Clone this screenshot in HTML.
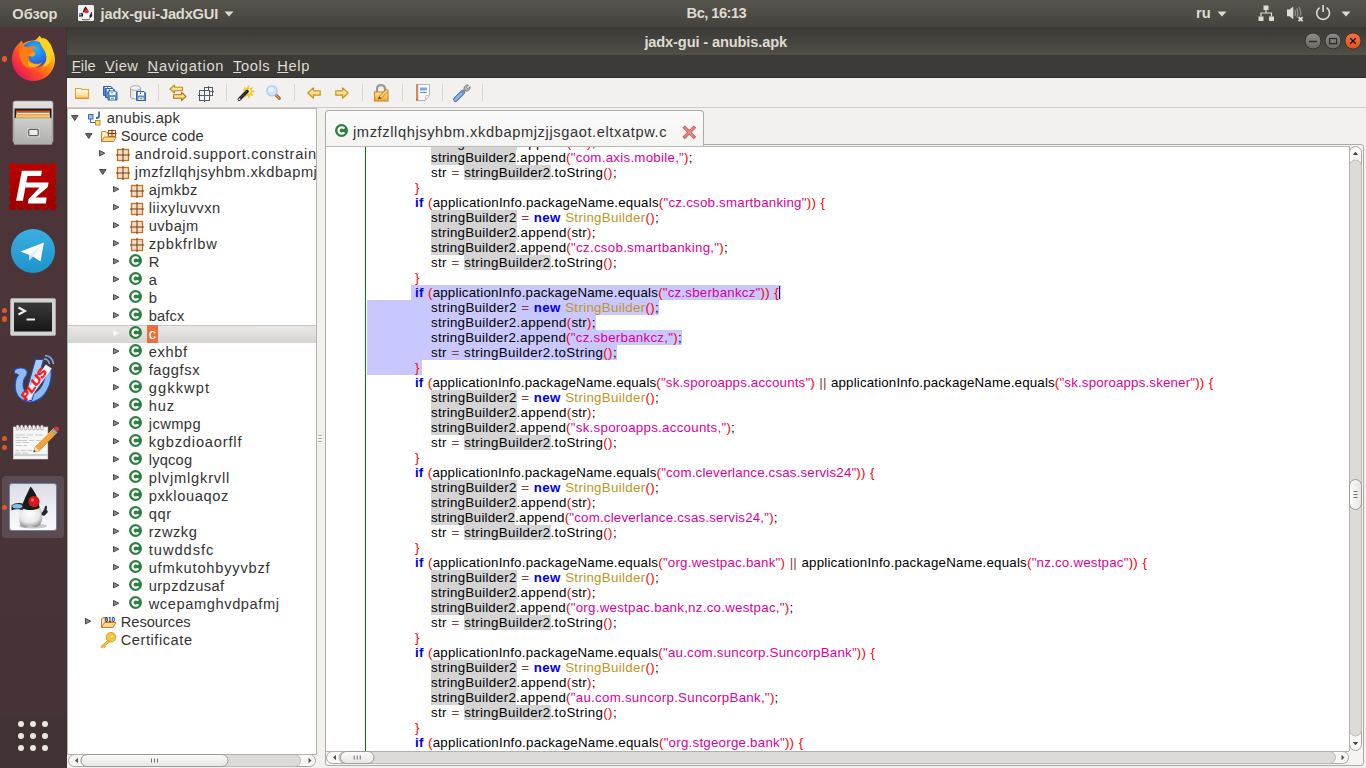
<!DOCTYPE html><html><head><meta charset="utf-8"><style>
*{margin:0;padding:0;box-sizing:border-box}
html,body{width:1366px;height:768px;overflow:hidden;background:#f2f1f0;font-family:"Liberation Sans",sans-serif}
.a{position:absolute}
svg.a{overflow:visible}
#topbar{left:0;top:0;width:1366px;height:27px;background:linear-gradient(#57544d,#45433e)}
#launcher{left:0;top:27px;width:67px;height:741px;background:linear-gradient(#4d3539,#493438 60%,#463337)}
#titlebar{left:67px;top:27px;width:1299px;height:28px;background:linear-gradient(#3b3a36,#3e3d39 20%,#524f49)}
#menubar{left:67px;top:55px;width:1299px;height:23px;background:#3c3b37;border-bottom:1px solid #2e2d2a}
#toolbar{left:67px;top:78px;width:1299px;height:30px;background:#f2f1f0;border-bottom:1px solid #cfccc6}
.tb{color:#dfdbd2;font-weight:bold;font-size:14.67px;white-space:nowrap;line-height:18px}
.menu{color:#dfdbd2;font-size:14.67px;white-space:nowrap;top:57px;line-height:18px;letter-spacing:0.4px}
.menu u{text-decoration:underline;text-decoration-thickness:1px;text-underline-offset:0.6px}
.sep{width:1px;height:17px;top:84px;background:#d9d6d1}
#tree{left:67px;top:108px;width:250px;height:647px;background:#fff;border-left:1px solid #b6b3ad;border-right:1px solid #b6b3ad;border-top:1px solid #bdbab5;overflow:hidden}
.tt{position:absolute;font-size:14.67px;line-height:18px;height:18px;color:#333;white-space:nowrap;letter-spacing:0.45px}
.code{position:absolute;left:0;font-size:13.3px;line-height:15px;height:15px;white-space:pre;color:#000;word-spacing:0.5px}
.k{color:#0000ee;font-weight:bold}
.s{color:#dc009c}
.p{color:#ff0000}
.o{color:#804040}
.c{color:#c09526}
.h{background:#d4d4d4}
</style></head><body>
<div id="topbar" class="a"></div>
<div class="a tb" style="left:12.3px;top:5px">Обзор</div>
<div class="a tb" style="left:100.6px;top:5px;letter-spacing:-0.19px">jadx-gui-JadxGUI</div>
<div class="a tb" style="left:686.6px;top:4px;letter-spacing:-0.527px">Вс, 16:13</div>
<div class="a tb" style="left:1196px;top:4px">ru</div>
<svg class="a" style="left:78px;top:5px;" width="16" height="16" viewBox="0 0 16 16"><rect x="0" y="0" width="16" height="16" rx="1.2" fill="#eeeef4"/>
<path d="M7.5 1.2 C6.3 3 5 5 4.8 7.5 L10.5 7.8 C10.2 5.5 9 3 7.5 1.2 Z" fill="#222"/>
<path d="M3.8 7.5 C2.8 10 3.2 13.5 4.2 14.5 C5.5 15.2 7.5 14.8 8.2 14 C9.2 15 11.2 14.8 11.8 13.5 C12.5 11.5 12 9 10.8 7.6 Z" fill="#fafafa" stroke="#b0b0b0" stroke-width="0.4"/>
<path d="M4 14.2 C6 15.2 10 15.2 12 14" stroke="#444" stroke-width="0.9" fill="none"/>
<circle cx="8.4" cy="6.2" r="2.1" fill="#e62828"/>
<path d="M1.2 8.6 C2.5 7.8 4.2 7.8 5.2 8.6 L4.8 11.8 C3.5 11.4 2.2 11.6 1.3 12 Z" fill="#1e1e1e"/>
<ellipse cx="2.4" cy="9.6" rx="1.2" ry="1" fill="#8cc0f0"/>
<path d="M11.5 10.5 C12.5 9.5 12.8 8.5 13 7.2 C13.5 6.8 14.2 7 13.9 8.2 L13.7 9.2 C14.6 9.5 14.4 11.4 13.5 11.8 C13 13 12 13 11.5 12.5 Z" fill="#1e1e1e"/></svg><svg class="a" style="left:224px;top:11px;" width="10" height="6" viewBox="0 0 10 6"><path d="M0.5 0.5 H9.5 L5 5.5 Z" fill="#dfdbd2"/></svg><svg class="a" style="left:1217px;top:11px;" width="10" height="6" viewBox="0 0 10 6"><path d="M0.5 0.5 H9.5 L5 5.5 Z" fill="#dfdbd2"/></svg><svg class="a" style="left:1341px;top:11px;" width="10" height="6" viewBox="0 0 10 6"><path d="M0.5 0.5 H9.5 L5 5.5 Z" fill="#dfdbd2"/></svg><svg class="a" style="left:1258px;top:5px;" width="17" height="17" viewBox="0 0 17 17"><rect x="5.5" y="0.5" width="5" height="4.5" fill="#dfdbd2"/><rect x="0.5" y="11.5" width="5" height="4.5" fill="#dfdbd2"/><rect x="11" y="11.5" width="5" height="4.5" fill="#dfdbd2"/><path d="M8 5 V8 M3 11.5 V8 H13.5 V11.5" fill="none" stroke="#dfdbd2" stroke-width="1.2"/></svg><svg class="a" style="left:1284px;top:3px" width="22" height="22" viewBox="1284 3 22 22"><path d="M1287 9.5 H1289.5 L1293.3 6.5 V19.2 L1289.5 16.2 H1287 Z" fill="#e0ddd8"/><path d="M1295 10 Q1296 13 1295 16 M1296.8 8.3 Q1298.8 13 1297 17.6 M1298.8 6.8 Q1301.6 12 1300.3 15.8" fill="none" stroke="#8e8b85" stroke-width="1.3"/><path d="M1298.6 17.2 L1302.6 21.2 M1302.6 17.2 L1298.6 21.2" stroke="#e6e3de" stroke-width="1.8"/></svg><svg class="a" style="left:1314px;top:3px" width="20" height="20" viewBox="1314 3 20 20"><path d="M1319.6 7.6 A6.4 6.4 0 1 0 1326.6 7.6" fill="none" stroke="#e0ddd8" stroke-width="1.6"/><path d="M1323.1 5 V12" stroke="#e0ddd8" stroke-width="1.6"/></svg>
<div id="launcher" class="a"></div><div class="a" style="left:0;top:717px;width:67px;height:51px;background:#413234"></div><div class="a" style="left:66px;top:27px;width:1px;height:741px;background:#3a3434"></div>
<svg width="0" height="0" style="position:absolute"><defs>
<linearGradient id="ffOuter" x1="0.1" y1="0.9" x2="0.9" y2="0.1"><stop offset="0" stop-color="#e3125f"/><stop offset="0.35" stop-color="#ff4a2a"/><stop offset="0.65" stop-color="#ff9a10"/><stop offset="1" stop-color="#ffe23a"/></linearGradient>
<radialGradient id="ffGlobe" cx="0.55" cy="0.3" r="0.8"><stop offset="0" stop-color="#2ab4f6"/><stop offset="0.6" stop-color="#1f6fe6"/><stop offset="1" stop-color="#3b2a9a"/></radialGradient>
<linearGradient id="cab" x1="0" y1="0" x2="0" y2="1"><stop offset="0" stop-color="#d2d2d0"/><stop offset="1" stop-color="#9c9c9a"/></linearGradient>
<linearGradient id="term" x1="0" y1="0" x2="0" y2="1"><stop offset="0" stop-color="#3a3a3a"/><stop offset="1" stop-color="#161616"/></linearGradient>
<linearGradient id="duke" x1="0" y1="0" x2="0" y2="1"><stop offset="0" stop-color="#dcdde6"/><stop offset="1" stop-color="#fbfbfd"/></linearGradient>
<linearGradient id="plusG" x1="0" y1="0" x2="1" y2="1"><stop offset="0" stop-color="#9cc8ff"/><stop offset="1" stop-color="#2d6ad8"/></linearGradient>
</defs></svg><svg class="a" style="left:11px;top:35px;" width="46" height="47" viewBox="0 0 46 47">
<path d="M22.5 46 C10.5 46 1 36.5 1 24.5 C1 17 4 11.5 8.5 8 L10.5 5.5 L12 8.5 C15 6.5 18.5 5.5 22.5 5.5 C25 5.5 27 2.5 28.5 0.8 L30.5 4 L32.5 2.5 L33.5 6.5 C40 10 44 17 44 24.5 C44 36.5 34.5 46 22.5 46 Z" fill="url(#ffOuter)"/>
<circle cx="23" cy="19.5" r="13.6" fill="url(#ffGlobe)"/>
<path d="M28.5 0.8 C27.5 6 30 10 32.5 14 C36.5 20 36.5 28 31.5 32.5 C38 30.5 42.5 24 42 17 C41.5 10 37 5 33.5 3 L32.5 6 C31.5 4 30 2.3 28.5 0.8 Z" fill="#ffd21c"/>
<path d="M9 9 C12 11.5 15 12.5 19.5 11.5 C22.5 10.8 24.5 11.5 25.5 13 C23 13 21.5 14.5 21.5 16.5 C24 17 25 19 23.5 20.5 C22 22 19.5 21.5 18 20.5 C17 23 18 26 21 27.5 C24.5 29.5 28.5 29 31.5 27 C28.5 32.5 22 35 16 32.5 C9.5 29.5 6.5 19 9 9 Z" fill="#ff7a10"/>
<path d="M18 20.5 C19.5 21.5 22 22 23.5 20.5 C25 19 24 17 21.5 16.5 C20 18 18.5 19 18 20.5 Z" fill="#ff9a18"/>
<path d="M17 25.5 C19 29 25 30.5 30 28.5 C27 32 21 33 17.5 30.5 Z" fill="#ffb51c"/>
</svg><div class="a" style="left:2.0999999999999996px;top:56.199999999999996px;width:5.4px;height:5.4px;border-radius:50%;background:#e0582a"></div><svg class="a" style="left:11px;top:100px;" width="44" height="46" viewBox="0 0 44 46">
<defs><linearGradient id="cabTop" x1="0" y1="0" x2="0" y2="1"><stop offset="0" stop-color="#e2e2e0"/><stop offset="1" stop-color="#b4b4b2"/></linearGradient>
<linearGradient id="cabFront" x1="0" y1="0" x2="0" y2="1"><stop offset="0" stop-color="#cfcfcd"/><stop offset="1" stop-color="#aeaeac"/></linearGradient></defs>
<path d="M2 3 Q2 1 4.5 1 H39.5 Q42 1 42 3 V42 H2 Z" fill="url(#cabTop)" stroke="#9a9a98" stroke-width="0.7"/>
<rect x="3.5" y="8.5" width="37" height="10" fill="#1c1c1c"/>
<rect x="5" y="10.5" width="34" height="2.6" fill="#d24a22"/>
<rect x="5.5" y="12.8" width="33" height="1.4" fill="#fafafa"/>
<rect x="5" y="14.2" width="34" height="4.3" fill="#f0c25a"/>
<rect x="3" y="18" width="38" height="26.5" rx="0.8" fill="url(#cabFront)" stroke="#949492" stroke-width="0.6"/>
<rect x="16" y="27.5" width="13" height="10" rx="1" fill="#dcdcda" stroke="#b8b8b6" stroke-width="0.6"/>
<rect x="17.8" y="29.3" width="9.4" height="6.4" rx="0.6" fill="#ededed" stroke="#3c3c3c" stroke-width="1"/>
</svg><svg class="a" style="left:8px;top:162px" width="50" height="50" viewBox="0 0 50 50"><defs><linearGradient id="fzG" gradientUnits="userSpaceOnUse" x1="0" y1="0" x2="0" y2="50"><stop offset="0" stop-color="#bd0000"/><stop offset="1" stop-color="#9c0000"/></linearGradient></defs><rect x="3" y="3" width="43.5" height="43" fill="url(#fzG)"/><g fill="url(#fzG)"><circle cx="4.5" cy="4.5" r="3.6"/><circle cx="4.5" cy="44.8" r="3.6"/><circle cx="4.5" cy="4.5" r="3.6"/><circle cx="45" cy="4.5" r="3.6"/><circle cx="12.5" cy="4.5" r="3.6"/><circle cx="12.5" cy="44.8" r="3.6"/><circle cx="4.5" cy="12.5" r="3.6"/><circle cx="45" cy="12.5" r="3.6"/><circle cx="20.5" cy="4.5" r="3.6"/><circle cx="20.5" cy="44.8" r="3.6"/><circle cx="4.5" cy="20.5" r="3.6"/><circle cx="45" cy="20.5" r="3.6"/><circle cx="28.5" cy="4.5" r="3.6"/><circle cx="28.5" cy="44.8" r="3.6"/><circle cx="4.5" cy="28.5" r="3.6"/><circle cx="45" cy="28.5" r="3.6"/><circle cx="36.5" cy="4.5" r="3.6"/><circle cx="36.5" cy="44.8" r="3.6"/><circle cx="4.5" cy="36.5" r="3.6"/><circle cx="45" cy="36.5" r="3.6"/><circle cx="44.5" cy="4.5" r="3.6"/><circle cx="44.5" cy="44.8" r="3.6"/><circle cx="4.5" cy="44.5" r="3.6"/><circle cx="45" cy="44.5" r="3.6"/></g><path d="M13.9 8.8 H34 L33 14 H19.5 L14.9 38.7 H8.1 Z" fill="#fff"/><path d="M18 20.4 H40.6 L39.6 25.2 L27.5 35.5 H38.6 L37.9 41.4 H19.8 L20.6 37 L31.5 25.4 H17.2 Z" fill="#fff"/></svg><svg class="a" style="left:11px;top:229px;" width="44" height="44" viewBox="0 0 44 44">
<defs><linearGradient id="tgG" x1="0" y1="0" x2="0" y2="1"><stop offset="0" stop-color="#3aaee2"/><stop offset="1" stop-color="#1e94cb"/></linearGradient></defs>
<circle cx="22" cy="22" r="22" fill="url(#tgG)"/>
<path d="M9.5 22.5 L33 13.5 L29.5 32.5 L22 27.5 L18.2 31.5 L18.5 26 Z" fill="#fafcfe"/>
<path d="M18.5 26 L31 15.5 L22 27.5 Z" fill="#e2eef6"/>
<path d="M18.2 31.5 L18.5 26 L22 27.5 Z" fill="#c4dcec"/>
</svg><svg class="a" style="left:10px;top:298px;" width="46" height="38" viewBox="0 0 46 38">
<rect x="0.5" y="0.5" width="45" height="37" rx="1.5" fill="#d4d4d2" stroke="#a8a8a6" stroke-width="1"/>
<rect x="4" y="4.5" width="38" height="29" fill="url(#term)"/>
<path d="M8.5 9.5 L15 13 L8.5 16.5" fill="none" stroke="#f0f0f0" stroke-width="2"/>
<rect x="16.5" y="20.5" width="8.5" height="2" fill="#f0f0f0"/>
</svg><div class="a" style="left:2.0px;top:307.8px;width:5.4px;height:5.4px;border-radius:50%;background:#e0582a"></div><div class="a" style="left:2.0px;top:316.3px;width:5.4px;height:5.4px;border-radius:50%;background:#e0582a"></div><svg class="a" style="left:8px;top:350px" width="52" height="56" viewBox="8 350 52 56"><path d="M14.5 370 C18 367.5 23 367.5 26 369.5 C28 371.5 27 375 25 377.5 C22.5 381 22.5 386.5 24.5 390.5 C26.5 394 31 395 35.5 392.5 C41.5 389 45.5 380 45.5 371.5 L51 369.5 C52.5 384 45.5 398.5 33.5 401.5 C24.5 403.5 17 398 15.5 389.5 C14.5 383 16 378 18.5 375 C17.5 373.5 16 373.5 14.5 373.5 Z" fill="#8cbcf2" stroke="#1f4fc0" stroke-width="1.1"/><path d="M35.5 359.5 H43.5 L32 400.5 H24 Z" fill="#a8ccf6" stroke="#1f4fc0" stroke-width="1"/><path d="M22.3 396.9 L45.8 364.4 L51.7 368.6 L28.2 401.1 Z" fill="#eef3fa"/><g transform="translate(26.6 401.2) rotate(-54.8)"><text x="0" y="0" font-family="Liberation Sans" font-weight="bold" font-style="italic" font-size="11.5" fill="#ff1414" stroke="#ff1414" stroke-width="0.5" letter-spacing="-0.2" textLength="36" lengthAdjust="spacingAndGlyphs">PLUS</text></g><path d="M45 355.5 C49.5 355.5 53 359 53.5 364 M44 359 C46.8 359 49 361 49.5 364" fill="none" stroke="#7ab0f0" stroke-width="1.6"/></svg><svg class="a" style="left:12px;top:424px;" width="46" height="37" viewBox="0 0 46 37">
<rect x="1.3" y="3" width="34.5" height="32" fill="#f6f6f6" stroke="#d8d8d8" stroke-width="0.6"/>
<rect x="1.6" y="30" width="34" height="2" fill="#d0d0d0"/>
<rect x="4.3" y="1" width="2.6" height="5" rx="1.3" fill="#fdfdfd" stroke="#7a7a7a" stroke-width="0.6"/><rect x="8.35" y="1" width="2.6" height="5" rx="1.3" fill="#fdfdfd" stroke="#7a7a7a" stroke-width="0.6"/><rect x="12.399999999999999" y="1" width="2.6" height="5" rx="1.3" fill="#fdfdfd" stroke="#7a7a7a" stroke-width="0.6"/><rect x="16.45" y="1" width="2.6" height="5" rx="1.3" fill="#fdfdfd" stroke="#7a7a7a" stroke-width="0.6"/><rect x="20.5" y="1" width="2.6" height="5" rx="1.3" fill="#fdfdfd" stroke="#7a7a7a" stroke-width="0.6"/><rect x="24.55" y="1" width="2.6" height="5" rx="1.3" fill="#fdfdfd" stroke="#7a7a7a" stroke-width="0.6"/><rect x="28.599999999999998" y="1" width="2.6" height="5" rx="1.3" fill="#fdfdfd" stroke="#7a7a7a" stroke-width="0.6"/>
<path d="M3.5 11 H13 M14.5 11 H21 M23 11 H31 M3.5 13.5 H8 M9.5 13.5 H16 M3.5 16.5 H15 M17 16.5 H22 M24 16.5 H31 M3.5 18.5 H9 M10.5 18.5 H17 M3.5 21.5 H10 M11.5 21.5 H15 M3.5 26.5 H7 M8.5 26.5 H14 M15.5 26.5 H20 M3.5 29 H9 M10 29 H16" stroke="#c4c4c4" stroke-width="0.9"/>
<path d="M21.5 28 L23.3 22.8 L39.5 6.6 L43.4 10.5 L27.2 26.7 Z" fill="#f2a43a" stroke="#c0701a" stroke-width="0.6"/>
<path d="M25 21 L41.5 4.6" stroke="#f8c878" stroke-width="0.8"/>
<path d="M39.5 6.6 L41.6 4.5 L45.5 8.4 L43.4 10.5 Z" fill="#a8a8a8"/>
<path d="M41.6 4.5 L42.8 3.3 Q44.5 1.8 46 3.3 Q47.5 4.8 46.7 6.3 L45.5 7.5 Z" fill="#e03a3a"/>
<path d="M21.5 28 L23.3 22.8 L27.2 26.7 Z" fill="#f6dcb0"/><path d="M21.5 28 L22.2 26 L23.6 27.3 Z" fill="#1a1a1a"/>
</svg><div class="a" style="left:2.0px;top:436.0px;width:5.4px;height:5.4px;border-radius:50%;background:#e0582a"></div><div class="a" style="left:2.0px;top:444.5px;width:5.4px;height:5.4px;border-radius:50%;background:#e0582a"></div><div class="a" style="left:2px;top:476px;width:62px;height:62px;border-radius:4px;background:#5c4b51"></div><svg class="a" style="left:9px;top:483px;" width="48" height="48" viewBox="0 0 48 48">
<defs><radialGradient id="dukeBody" cx="0.45" cy="0.35" r="0.7"><stop offset="0" stop-color="#ffffff"/><stop offset="0.6" stop-color="#e8e8e8"/><stop offset="1" stop-color="#8a8a8a"/></radialGradient></defs>
<rect x="0.5" y="0.5" width="47" height="47" rx="2.5" fill="url(#duke)" stroke="#6f80a8" stroke-width="1"/>
<ellipse cx="24" cy="43" rx="14" ry="2.5" fill="#c8c8cc"/>
<path d="M12.5 24 C9.5 30 10 38 11.5 42 C13.5 45.5 18.5 45 21 42 C23.5 45 29.5 45 31.5 41 C34.5 35 33.5 28 30.5 24 Z" fill="url(#dukeBody)"/>
<path d="M21.5 3.5 C18 11 14.5 17 12.5 25 C17 27.5 25 28 30.5 25 C30 18 27 9.5 21.5 3.5 Z" fill="#1a1a1a"/>
<circle cx="25" cy="18.5" r="5.6" fill="#d41a1a"/><circle cx="23.6" cy="17" r="1.7" fill="#ff6a6a" opacity="0.8"/>
<path d="M2.5 22.5 C6 19.5 12 19.5 15 21.5 L13.5 27.5 C10 25.5 5 26.5 2.5 27.5 Z" fill="#262626"/>
<ellipse cx="8.3" cy="23.3" rx="5" ry="2.2" fill="#86bdf0"/>
<path d="M32.5 30 C34.5 28 35.5 26 35.8 24 C36.5 22 38.5 22.5 38 25 L37.5 27 C39.2 27.2 39 30.2 37 31 C36 33 34 33.2 32.8 32 Z" fill="#262626"/>
</svg><div class="a" style="left:2.0px;top:504.5px;width:5.4px;height:5.4px;border-radius:50%;background:#e0582a"></div><div class="a" style="left:18px;top:721px;width:6px;height:6px;border-radius:50%;background:#ebe8e4"></div><div class="a" style="left:18px;top:733px;width:6px;height:6px;border-radius:50%;background:#ebe8e4"></div><div class="a" style="left:18px;top:745px;width:6px;height:6px;border-radius:50%;background:#ebe8e4"></div><div class="a" style="left:30px;top:721px;width:6px;height:6px;border-radius:50%;background:#ebe8e4"></div><div class="a" style="left:30px;top:733px;width:6px;height:6px;border-radius:50%;background:#ebe8e4"></div><div class="a" style="left:30px;top:745px;width:6px;height:6px;border-radius:50%;background:#ebe8e4"></div><div class="a" style="left:42px;top:721px;width:6px;height:6px;border-radius:50%;background:#ebe8e4"></div><div class="a" style="left:42px;top:733px;width:6px;height:6px;border-radius:50%;background:#ebe8e4"></div><div class="a" style="left:42px;top:745px;width:6px;height:6px;border-radius:50%;background:#ebe8e4"></div>
<div id="titlebar" class="a"></div>
<div class="a tb" style="left:644.4px;top:32.5px;letter-spacing:-0.151px">jadx-gui - anubis.apk</div>
<svg class="a" style="left:1304px;top:32px;" width="18" height="18" viewBox="0 0 18 18"><circle cx="9" cy="9" r="8" fill="url(#gWb)" stroke="#34332f" stroke-width="1"/><path d="M5 9.5 H13" stroke="#2e2d2a" stroke-width="1.4"/></svg><svg class="a" style="left:1324px;top:32px;" width="18" height="18" viewBox="0 0 18 18"><circle cx="9" cy="9" r="8" fill="url(#gWb)" stroke="#34332f" stroke-width="1"/><rect x="5.6" y="6.5" width="7" height="5.2" fill="none" stroke="#2e2d2a" stroke-width="1.3"/></svg><svg class="a" style="left:1344px;top:32px;" width="18" height="18" viewBox="0 0 18 18"><circle cx="9" cy="9" r="8" fill="url(#gClose)" stroke="#3a2a22" stroke-width="0.8"/><path d="M6.2 6.2 L11.8 11.8 M11.8 6.2 L6.2 11.8" stroke="#1e120c" stroke-width="1.3"/></svg>
<div id="menubar" class="a"></div>
<div class="a menu" style="left:71.7px;letter-spacing:0.112px"><u>F</u>ile</div>
<div class="a menu" style="left:105px;letter-spacing:0.461px"><u>V</u>iew</div>
<div class="a menu" style="left:147.6px;letter-spacing:0.733px"><u>N</u>avigation</div>
<div class="a menu" style="left:233.1px;letter-spacing:0.579px"><u>T</u>ools</div>
<div class="a menu" style="left:277.2px;letter-spacing:0.669px"><u>H</u>elp</div>
<div id="toolbar" class="a"></div>
<div class="a sep" style="left:158px"></div>
<div class="a sep" style="left:226px"></div>
<div class="a sep" style="left:294px"></div>
<div class="a sep" style="left:362px"></div>
<div class="a sep" style="left:402px"></div>
<div class="a sep" style="left:442px"></div>
<div class="a sep" style="left:482px"></div>
<svg width="0" height="0" style="position:absolute"><defs>
<linearGradient id="gFold" x1="0" y1="0" x2="0" y2="1"><stop offset="0" stop-color="#fffef6"/><stop offset="0.5" stop-color="#fcebb5"/><stop offset="1" stop-color="#f5c84a"/></linearGradient>
<linearGradient id="gArr" x1="0" y1="0" x2="0" y2="1"><stop offset="0" stop-color="#fffbe6"/><stop offset="1" stop-color="#f2c446"/></linearGradient>
<linearGradient id="gLock" x1="0" y1="0" x2="0" y2="1"><stop offset="0" stop-color="#fde7a0"/><stop offset="1" stop-color="#eca23a"/></linearGradient>
<linearGradient id="gCyl" x1="0" y1="0" x2="1" y2="0"><stop offset="0" stop-color="#d8d8d8"/><stop offset="0.5" stop-color="#fafafa"/><stop offset="1" stop-color="#cfcfcf"/></linearGradient>
<radialGradient id="gLens" cx="0.4" cy="0.4" r="0.6"><stop offset="0" stop-color="#eef6ff"/><stop offset="1" stop-color="#a9cdf0"/></radialGradient>
<linearGradient id="gClose" x1="0" y1="0" x2="0" y2="1"><stop offset="0" stop-color="#f0764a"/><stop offset="1" stop-color="#e0521e"/></linearGradient>
<linearGradient id="gWb" x1="0" y1="0" x2="0" y2="1"><stop offset="0" stop-color="#8e8c88"/><stop offset="1" stop-color="#6a6864"/></linearGradient>
</defs></svg><svg class="a" style="left:74px;top:87px;" width="16" height="13" viewBox="0 0 16 13"><path d="M1.5 1.5 H7 L8 2.5 H14.5 V11.5 H1.5 Z" fill="url(#gFold)" stroke="#e0a43c" stroke-width="1.2"/><path d="M2 11.2 H14" stroke="#e8703c" stroke-width="0.8"/></svg><svg class="a" style="left:103px;top:86px;" width="15" height="15" viewBox="0 0 15 15"><g transform="translate(0,0)"><path d="M0.5 0.5 H8 L9.5 2 V9.5 H0.5 Z" fill="#5d8fd8" stroke="#2f5fae" stroke-width="1"/><rect x="2" y="1" width="6" height="3.5" fill="#fff"/><rect x="4" y="1.5" width="1" height="1.5" fill="#2f5fae"/><rect x="2.5" y="6.5" width="5" height="2.5" fill="#fff"/><rect x="3.5" y="7" width="3" height="1.5" fill="#8cc040"/></g><g transform="translate(2,2)"><path d="M0.5 0.5 H8 L9.5 2 V9.5 H0.5 Z" fill="#5d8fd8" stroke="#2f5fae" stroke-width="1"/><rect x="2" y="1" width="6" height="3.5" fill="#fff"/><rect x="4" y="1.5" width="1" height="1.5" fill="#2f5fae"/><rect x="2.5" y="6.5" width="5" height="2.5" fill="#fff"/><rect x="3.5" y="7" width="3" height="1.5" fill="#8cc040"/></g><g transform="translate(4.5,4.5)"><path d="M0.5 0.5 H8 L9.5 2 V9.5 H0.5 Z" fill="#5d8fd8" stroke="#2f5fae" stroke-width="1"/><rect x="2" y="1" width="6" height="3.5" fill="#fff"/><rect x="4" y="1.5" width="1" height="1.5" fill="#2f5fae"/><rect x="2.5" y="6.5" width="5" height="2.5" fill="#fff"/><rect x="3.5" y="7" width="3" height="1.5" fill="#8cc040"/></g></svg><svg class="a" style="left:129px;top:85px;" width="18" height="17" viewBox="0 0 18 17"><path d="M1.5 3 V12 Q1.5 14 6.5 14 Q11.5 14 11.5 12 V3" fill="url(#gCyl)" stroke="#a8a8a8" stroke-width="1"/><ellipse cx="6.5" cy="3" rx="5" ry="2.3" fill="#f4f4f4" stroke="#a8a8a8" stroke-width="1"/><g transform="translate(7,6)"><path d="M0.5 0.5 H8 L9.5 2 V9.5 H0.5 Z" fill="#5d8fd8" stroke="#2f5fae" stroke-width="1"/><rect x="2" y="1" width="6" height="3.5" fill="#fff"/><rect x="4" y="1.5" width="1" height="1.5" fill="#2f5fae"/><rect x="2.5" y="6.5" width="5" height="2.5" fill="#fff"/><rect x="3.5" y="7" width="3" height="1.5" fill="#8cc040"/></g></svg><svg class="a" style="left:169px;top:84px;" width="18" height="18" viewBox="0 0 18 18"><path d="M1 5 L5.5 1 V3.3 H13.5 V6.7 H5.5 V9 Z" fill="url(#gArr)" stroke="#c08a1c" stroke-width="1.1" stroke-linejoin="round"/><path d="M17 12.5 L12.5 8.5 V10.8 H4.5 V14.2 H12.5 V16.5 Z" fill="url(#gArr)" stroke="#b8701c" stroke-width="1.1" stroke-linejoin="round"/></svg><svg class="a" style="left:195px;top:82px" width="22" height="22" viewBox="195 82 22 22"><rect x="204.5" y="87.5" width="8" height="8" fill="#eef6ff" stroke="#5a5a5a" stroke-width="1"/><path d="M208.5 86 V91.5 M208.5 91.5 H214" fill="none" stroke="#5a5a5a" stroke-width="1"/><rect x="199.5" y="90.5" width="10" height="10" fill="#eef6ff" stroke="#5a5a5a" stroke-width="1"/><path d="M204.5 89 V102 M198 95.5 H211" stroke="#5a5a5a" stroke-width="1"/></svg><svg class="a" style="left:235px;top:82px" width="22" height="22" viewBox="235 82 22 22"><path d="M243.5 90.5 L245 87.2 L246.3 89.5 L248.5 85.5 L249.2 89.3 L252.5 87.5 L251 90.6 L254.5 91.5 L251.2 92.6 L253 95.5 L249.6 94.5 L249 98 L247.3 95 L245 97 L245.6 93.7 L242.5 93.5 L245 92 Z" fill="#ffd21a" stroke="#f5b000" stroke-width="0.5"/><circle cx="248.3" cy="91.3" r="2.3" fill="#fff6c0"/><path d="M239.3 99.3 L247.2 91.4" stroke="#1e1e1e" stroke-width="3.4" stroke-linecap="round"/><path d="M239.6 98.6 L246.8 91.6" stroke="#9a9a9a" stroke-width="0.8" stroke-dasharray="1 0.8"/><circle cx="239.5" cy="99.2" r="1" fill="#e8e8e8"/></svg><svg class="a" style="left:264px;top:82px" width="20" height="20" viewBox="264 82 20 20"><path d="M275.6 94.6 L279.4 98.4" stroke="#b06a30" stroke-width="3" stroke-linecap="round"/><path d="M275.8 94.8 L279.2 98.2" stroke="#e0a060" stroke-width="1" stroke-linecap="round"/><circle cx="272" cy="90.8" r="5.2" fill="#cfe4f8" stroke="#a6cbee" stroke-width="1.2"/><circle cx="271" cy="89.8" r="2.5" fill="#e6f1fc"/></svg><svg class="a" style="left:307px;top:87px;" width="14" height="12" viewBox="0 0 14 12"><path d="M0.8 6 L6.5 0.8 V3.8 H13.2 V8.2 H6.5 V11.2 Z" fill="url(#gArr)" stroke="#c8961e" stroke-width="1.2" stroke-linejoin="round"/></svg><svg class="a" style="left:335px;top:87px;transform:scaleX(-1)" width="14" height="12" viewBox="0 0 14 12"><path d="M0.8 6 L6.5 0.8 V3.8 H13.2 V8.2 H6.5 V11.2 Z" fill="url(#gArr)" stroke="#c8961e" stroke-width="1.2" stroke-linejoin="round"/></svg><svg class="a" style="left:373px;top:84px;" width="17" height="18" viewBox="0 0 17 18"><path d="M4 8 V5.5 Q4 1.2 8 1.2 Q12 1.2 12 5.5 V8" fill="none" stroke="#9a9a9a" stroke-width="2.2"/><rect x="1.5" y="8" width="13.5" height="9" fill="url(#gLock)" stroke="#d8841c" stroke-width="1.1"/><path d="M5.5 15 L6.3 12.2 L13.5 5 L15.5 7 L8.3 14.2 Z" fill="#f6d46a" stroke="#a46a20" stroke-width="0.8"/><path d="M5.5 15 L6.3 12.2 L8.3 14.2 Z" fill="#6a4a2a"/></svg><svg class="a" style="left:415px;top:84px;" width="16" height="17" viewBox="0 0 16 17"><path d="M1.5 0.5 H14.5 V11.5 L10.5 16.5 H1.5 Z" fill="#fbfbfb" stroke="#b5b5b5" stroke-width="1"/><rect x="1" y="0.5" width="2.2" height="16" fill="#c06a30"/><path d="M1 2 H3.2 M1 4 H3.2 M1 6 H3.2 M1 8 H3.2 M1 10 H3.2 M1 12 H3.2 M1 14 H3.2" stroke="#f0d0b0" stroke-width="0.7"/><rect x="5" y="3.5" width="7" height="3" fill="#7aa6ea"/><path d="M5 8.5 H12" stroke="#6a96e0" stroke-width="1"/><path d="M14.5 11.5 L10.5 11.5 L10.5 16.5" fill="none" stroke="#c8c8c8" stroke-width="1"/></svg><svg class="a" style="left:453px;top:84px;" width="18" height="18" viewBox="0 0 18 18"><path d="M2.5 15.5 L10 8" stroke="#3d72c8" stroke-width="4.6" stroke-linecap="round"/><path d="M2.5 15.5 L10 8" stroke="#8fb4ee" stroke-width="2.6" stroke-linecap="round"/><path d="M9 9 L12 6" stroke="#8a8a8a" stroke-width="2.4"/><path d="M11 4.5 A3.8 3.8 0 0 1 15.5 1 L13.5 3.2 L14.8 4.8 L17 2.6 A3.8 3.8 0 0 1 13.2 7.2 Z" fill="#b8b8b8" stroke="#7a7a7a" stroke-width="0.9"/></svg>
<div id="tree" class="a"></div>
<div class="a" style="left:68px;top:109px;width:248px;height:646px;overflow:hidden">
<svg class="a" style="left:3px;top:6px" width="8" height="6" viewBox="0 0 8 6"><path d="M0.5 0.5 L7 0.5 L3.75 5.5 Z" fill="#6a6a6a" stroke="#4a4a4a" stroke-width="1" stroke-linejoin="round"/></svg>
<svg class="a" style="left:20px;top:2px" width="13" height="15" viewBox="0 0 13 15"><rect x="0.5" y="3.5" width="4.5" height="4.5" fill="#a8c0dc" stroke="#3b6eb0" stroke-width="1"/><path d="M2.5 8 V11.5 H7" fill="none" stroke="#3b6eb0" stroke-width="1"/><rect x="7.5" y="9.5" width="4.5" height="4.5" fill="#f6d77a" stroke="#c8951a" stroke-width="1"/><path d="M11 0.5 V5 Q11 7 9 7 H8" fill="none" stroke="#3b6eb0" stroke-width="1.8"/></svg>
<div class="tt" style="left:38.7px;top:0px;letter-spacing:0.249px">anubis.apk</div>
<svg class="a" style="left:17px;top:24px" width="8" height="6" viewBox="0 0 8 6"><path d="M0.5 0.5 L7 0.5 L3.75 5.5 Z" fill="#6a6a6a" stroke="#4a4a4a" stroke-width="1" stroke-linejoin="round"/></svg>
<svg class="a" style="left:33px;top:21px" width="16" height="13" viewBox="0 0 16 13"><path d="M0.5 2.5 Q0.5 1.5 1.5 1.5 H4.5 L5.5 2.5 H7.5 V11.5 H0.5 Z" fill="#fbe9b8" stroke="#d07a28" stroke-width="1"/><rect x="7.5" y="0.5" width="7" height="6" fill="#f6dcc2" stroke="#a8581a" stroke-width="1"/><path d="M11 -0.5 V7 M6.5 3.5 H15.5" stroke="#6e3a1a" stroke-width="1"/><path d="M0.5 11.5 L3.3 7 H15.2 L12.4 11.5 Z" fill="#f9dc92" stroke="#d07a28" stroke-width="1" stroke-linejoin="round"/></svg>
<div class="tt" style="left:52.7px;top:18px;letter-spacing:0.056px">Source code</div>
<svg class="a" style="left:31px;top:41.3px" width="7" height="7" viewBox="0 0 7 7"><path d="M0.5 0.5 L5.8 3.2 L0.5 5.9 Z" fill="#8a8a8a" stroke="#4a4a4a" stroke-width="1" stroke-linejoin="round"/></svg>
<svg class="a" style="left:48px;top:39px" width="14" height="14" viewBox="0 0 14 14"><rect x="1.5" y="1.5" width="11" height="11" fill="#f3d2ae" stroke="#c8701e" stroke-width="1.3"/><rect x="2.5" y="2.5" width="9" height="9" fill="#f6dcc0"/><path d="M7 0 V14 M0 7 H14" stroke="#6e3a1a" stroke-width="1"/></svg>
<div class="tt" style="left:66.7px;top:36px;letter-spacing:0.665px">android.support.constrain</div>
<svg class="a" style="left:31px;top:60px" width="8" height="6" viewBox="0 0 8 6"><path d="M0.5 0.5 L7 0.5 L3.75 5.5 Z" fill="#6a6a6a" stroke="#4a4a4a" stroke-width="1" stroke-linejoin="round"/></svg>
<svg class="a" style="left:48px;top:57px" width="14" height="14" viewBox="0 0 14 14"><rect x="1.5" y="1.5" width="11" height="11" fill="#f3d2ae" stroke="#c8701e" stroke-width="1.3"/><rect x="2.5" y="2.5" width="9" height="9" fill="#f6dcc0"/><path d="M7 0 V14 M0 7 H14" stroke="#6e3a1a" stroke-width="1"/></svg>
<div class="tt" style="left:66.7px;top:54px;letter-spacing:0.52px">jmzfzllqhjsyhbm.xkdbapmjzjjsgaot</div>
<svg class="a" style="left:45px;top:77.3px" width="7" height="7" viewBox="0 0 7 7"><path d="M0.5 0.5 L5.8 3.2 L0.5 5.9 Z" fill="#8a8a8a" stroke="#4a4a4a" stroke-width="1" stroke-linejoin="round"/></svg>
<svg class="a" style="left:62px;top:75px" width="14" height="14" viewBox="0 0 14 14"><rect x="1.5" y="1.5" width="11" height="11" fill="#f3d2ae" stroke="#c8701e" stroke-width="1.3"/><rect x="2.5" y="2.5" width="9" height="9" fill="#f6dcc0"/><path d="M7 0 V14 M0 7 H14" stroke="#6e3a1a" stroke-width="1"/></svg>
<div class="tt" style="left:80.7px;top:72px;letter-spacing:0.441px">ajmkbz</div>
<svg class="a" style="left:45px;top:95.3px" width="7" height="7" viewBox="0 0 7 7"><path d="M0.5 0.5 L5.8 3.2 L0.5 5.9 Z" fill="#8a8a8a" stroke="#4a4a4a" stroke-width="1" stroke-linejoin="round"/></svg>
<svg class="a" style="left:62px;top:93px" width="14" height="14" viewBox="0 0 14 14"><rect x="1.5" y="1.5" width="11" height="11" fill="#f3d2ae" stroke="#c8701e" stroke-width="1.3"/><rect x="2.5" y="2.5" width="9" height="9" fill="#f6dcc0"/><path d="M7 0 V14 M0 7 H14" stroke="#6e3a1a" stroke-width="1"/></svg>
<div class="tt" style="left:80.7px;top:90px;letter-spacing:0.558px">liixyluvvxn</div>
<svg class="a" style="left:45px;top:113.3px" width="7" height="7" viewBox="0 0 7 7"><path d="M0.5 0.5 L5.8 3.2 L0.5 5.9 Z" fill="#8a8a8a" stroke="#4a4a4a" stroke-width="1" stroke-linejoin="round"/></svg>
<svg class="a" style="left:62px;top:111px" width="14" height="14" viewBox="0 0 14 14"><rect x="1.5" y="1.5" width="11" height="11" fill="#f3d2ae" stroke="#c8701e" stroke-width="1.3"/><rect x="2.5" y="2.5" width="9" height="9" fill="#f6dcc0"/><path d="M7 0 V14 M0 7 H14" stroke="#6e3a1a" stroke-width="1"/></svg>
<div class="tt" style="left:80.7px;top:108px;letter-spacing:0.472px">uvbajm</div>
<svg class="a" style="left:45px;top:131.3px" width="7" height="7" viewBox="0 0 7 7"><path d="M0.5 0.5 L5.8 3.2 L0.5 5.9 Z" fill="#8a8a8a" stroke="#4a4a4a" stroke-width="1" stroke-linejoin="round"/></svg>
<svg class="a" style="left:62px;top:129px" width="14" height="14" viewBox="0 0 14 14"><rect x="1.5" y="1.5" width="11" height="11" fill="#f3d2ae" stroke="#c8701e" stroke-width="1.3"/><rect x="2.5" y="2.5" width="9" height="9" fill="#f6dcc0"/><path d="M7 0 V14 M0 7 H14" stroke="#6e3a1a" stroke-width="1"/></svg>
<div class="tt" style="left:80.7px;top:126px;letter-spacing:0.785px">zpbkfrlbw</div>
<svg class="a" style="left:45px;top:149.3px" width="7" height="7" viewBox="0 0 7 7"><path d="M0.5 0.5 L5.8 3.2 L0.5 5.9 Z" fill="#8a8a8a" stroke="#4a4a4a" stroke-width="1" stroke-linejoin="round"/></svg>
<svg class="a" style="left:61px;top:145px" width="13" height="13" viewBox="0 0 13 13"><circle cx="6.5" cy="6.5" r="6.5" fill="#2d7f3d"/><path d="M9.3 4.6 A3.2 3.2 0 1 0 9.3 8.4" fill="none" stroke="#fff" stroke-width="2.3"/><circle cx="6.5" cy="6.5" r="1.2" fill="#2d7f3d"/></svg>
<div class="tt" style="left:80.7px;top:144px;letter-spacing:0px">R</div>
<svg class="a" style="left:45px;top:167.3px" width="7" height="7" viewBox="0 0 7 7"><path d="M0.5 0.5 L5.8 3.2 L0.5 5.9 Z" fill="#8a8a8a" stroke="#4a4a4a" stroke-width="1" stroke-linejoin="round"/></svg>
<svg class="a" style="left:61px;top:163px" width="13" height="13" viewBox="0 0 13 13"><circle cx="6.5" cy="6.5" r="6.5" fill="#2d7f3d"/><path d="M9.3 4.6 A3.2 3.2 0 1 0 9.3 8.4" fill="none" stroke="#fff" stroke-width="2.3"/><circle cx="6.5" cy="6.5" r="1.2" fill="#2d7f3d"/></svg>
<div class="tt" style="left:80.7px;top:162px;letter-spacing:0px">a</div>
<svg class="a" style="left:45px;top:185.3px" width="7" height="7" viewBox="0 0 7 7"><path d="M0.5 0.5 L5.8 3.2 L0.5 5.9 Z" fill="#8a8a8a" stroke="#4a4a4a" stroke-width="1" stroke-linejoin="round"/></svg>
<svg class="a" style="left:61px;top:181px" width="13" height="13" viewBox="0 0 13 13"><circle cx="6.5" cy="6.5" r="6.5" fill="#2d7f3d"/><path d="M9.3 4.6 A3.2 3.2 0 1 0 9.3 8.4" fill="none" stroke="#fff" stroke-width="2.3"/><circle cx="6.5" cy="6.5" r="1.2" fill="#2d7f3d"/></svg>
<div class="tt" style="left:80.7px;top:180px;letter-spacing:0px">b</div>
<svg class="a" style="left:45px;top:203.3px" width="7" height="7" viewBox="0 0 7 7"><path d="M0.5 0.5 L5.8 3.2 L0.5 5.9 Z" fill="#8a8a8a" stroke="#4a4a4a" stroke-width="1" stroke-linejoin="round"/></svg>
<svg class="a" style="left:61px;top:199px" width="13" height="13" viewBox="0 0 13 13"><circle cx="6.5" cy="6.5" r="6.5" fill="#2d7f3d"/><path d="M9.3 4.6 A3.2 3.2 0 1 0 9.3 8.4" fill="none" stroke="#fff" stroke-width="2.3"/><circle cx="6.5" cy="6.5" r="1.2" fill="#2d7f3d"/></svg>
<div class="tt" style="left:80.7px;top:198px;letter-spacing:0.149px">bafcx</div>
<div class="a" style="left:0;top:216px;width:248px;height:18px;background:linear-gradient(#e9e8e6,#d6d4d1);border-top:1px solid #cbc9c5"></div>
<svg class="a" style="left:45px;top:221.3px" width="7" height="7" viewBox="0 0 7 7"><path d="M0.5 0.5 L5.8 3.2 L0.5 5.9 Z" fill="#fafafa" stroke="#f0f0f0" stroke-width="1"/></svg>
<svg class="a" style="left:61px;top:217px" width="13" height="13" viewBox="0 0 13 13"><circle cx="6.5" cy="6.5" r="6.5" fill="#2d7f3d"/><path d="M9.3 4.6 A3.2 3.2 0 1 0 9.3 8.4" fill="none" stroke="#fff" stroke-width="2.3"/><circle cx="6.5" cy="6.5" r="1.2" fill="#2d7f3d"/></svg>
<div class="tt" style="left:79.0px;top:216px;background:#e9703d;color:#fff;padding:0 1.5px 0 1.7px">c</div>
<svg class="a" style="left:45px;top:239.3px" width="7" height="7" viewBox="0 0 7 7"><path d="M0.5 0.5 L5.8 3.2 L0.5 5.9 Z" fill="#8a8a8a" stroke="#4a4a4a" stroke-width="1" stroke-linejoin="round"/></svg>
<svg class="a" style="left:61px;top:235px" width="13" height="13" viewBox="0 0 13 13"><circle cx="6.5" cy="6.5" r="6.5" fill="#2d7f3d"/><path d="M9.3 4.6 A3.2 3.2 0 1 0 9.3 8.4" fill="none" stroke="#fff" stroke-width="2.3"/><circle cx="6.5" cy="6.5" r="1.2" fill="#2d7f3d"/></svg>
<div class="tt" style="left:80.7px;top:234px;letter-spacing:0.63px">exhbf</div>
<svg class="a" style="left:45px;top:257.3px" width="7" height="7" viewBox="0 0 7 7"><path d="M0.5 0.5 L5.8 3.2 L0.5 5.9 Z" fill="#8a8a8a" stroke="#4a4a4a" stroke-width="1" stroke-linejoin="round"/></svg>
<svg class="a" style="left:61px;top:253px" width="13" height="13" viewBox="0 0 13 13"><circle cx="6.5" cy="6.5" r="6.5" fill="#2d7f3d"/><path d="M9.3 4.6 A3.2 3.2 0 1 0 9.3 8.4" fill="none" stroke="#fff" stroke-width="2.3"/><circle cx="6.5" cy="6.5" r="1.2" fill="#2d7f3d"/></svg>
<div class="tt" style="left:80.7px;top:252px;letter-spacing:0.596px">faggfsx</div>
<svg class="a" style="left:45px;top:275.3px" width="7" height="7" viewBox="0 0 7 7"><path d="M0.5 0.5 L5.8 3.2 L0.5 5.9 Z" fill="#8a8a8a" stroke="#4a4a4a" stroke-width="1" stroke-linejoin="round"/></svg>
<svg class="a" style="left:61px;top:271px" width="13" height="13" viewBox="0 0 13 13"><circle cx="6.5" cy="6.5" r="6.5" fill="#2d7f3d"/><path d="M9.3 4.6 A3.2 3.2 0 1 0 9.3 8.4" fill="none" stroke="#fff" stroke-width="2.3"/><circle cx="6.5" cy="6.5" r="1.2" fill="#2d7f3d"/></svg>
<div class="tt" style="left:80.7px;top:270px;letter-spacing:1.118px">ggkkwpt</div>
<svg class="a" style="left:45px;top:293.3px" width="7" height="7" viewBox="0 0 7 7"><path d="M0.5 0.5 L5.8 3.2 L0.5 5.9 Z" fill="#8a8a8a" stroke="#4a4a4a" stroke-width="1" stroke-linejoin="round"/></svg>
<svg class="a" style="left:61px;top:289px" width="13" height="13" viewBox="0 0 13 13"><circle cx="6.5" cy="6.5" r="6.5" fill="#2d7f3d"/><path d="M9.3 4.6 A3.2 3.2 0 1 0 9.3 8.4" fill="none" stroke="#fff" stroke-width="2.3"/><circle cx="6.5" cy="6.5" r="1.2" fill="#2d7f3d"/></svg>
<div class="tt" style="left:80.7px;top:288px;letter-spacing:0.899px">huz</div>
<svg class="a" style="left:45px;top:311.3px" width="7" height="7" viewBox="0 0 7 7"><path d="M0.5 0.5 L5.8 3.2 L0.5 5.9 Z" fill="#8a8a8a" stroke="#4a4a4a" stroke-width="1" stroke-linejoin="round"/></svg>
<svg class="a" style="left:61px;top:307px" width="13" height="13" viewBox="0 0 13 13"><circle cx="6.5" cy="6.5" r="6.5" fill="#2d7f3d"/><path d="M9.3 4.6 A3.2 3.2 0 1 0 9.3 8.4" fill="none" stroke="#fff" stroke-width="2.3"/><circle cx="6.5" cy="6.5" r="1.2" fill="#2d7f3d"/></svg>
<div class="tt" style="left:80.7px;top:306px;letter-spacing:0.434px">jcwmpg</div>
<svg class="a" style="left:45px;top:329.3px" width="7" height="7" viewBox="0 0 7 7"><path d="M0.5 0.5 L5.8 3.2 L0.5 5.9 Z" fill="#8a8a8a" stroke="#4a4a4a" stroke-width="1" stroke-linejoin="round"/></svg>
<svg class="a" style="left:61px;top:325px" width="13" height="13" viewBox="0 0 13 13"><circle cx="6.5" cy="6.5" r="6.5" fill="#2d7f3d"/><path d="M9.3 4.6 A3.2 3.2 0 1 0 9.3 8.4" fill="none" stroke="#fff" stroke-width="2.3"/><circle cx="6.5" cy="6.5" r="1.2" fill="#2d7f3d"/></svg>
<div class="tt" style="left:80.7px;top:324px;letter-spacing:0.806px">kgbzdioaorflf</div>
<svg class="a" style="left:45px;top:347.3px" width="7" height="7" viewBox="0 0 7 7"><path d="M0.5 0.5 L5.8 3.2 L0.5 5.9 Z" fill="#8a8a8a" stroke="#4a4a4a" stroke-width="1" stroke-linejoin="round"/></svg>
<svg class="a" style="left:61px;top:343px" width="13" height="13" viewBox="0 0 13 13"><circle cx="6.5" cy="6.5" r="6.5" fill="#2d7f3d"/><path d="M9.3 4.6 A3.2 3.2 0 1 0 9.3 8.4" fill="none" stroke="#fff" stroke-width="2.3"/><circle cx="6.5" cy="6.5" r="1.2" fill="#2d7f3d"/></svg>
<div class="tt" style="left:80.7px;top:342px;letter-spacing:0.217px">lyqcog</div>
<svg class="a" style="left:45px;top:365.3px" width="7" height="7" viewBox="0 0 7 7"><path d="M0.5 0.5 L5.8 3.2 L0.5 5.9 Z" fill="#8a8a8a" stroke="#4a4a4a" stroke-width="1" stroke-linejoin="round"/></svg>
<svg class="a" style="left:61px;top:361px" width="13" height="13" viewBox="0 0 13 13"><circle cx="6.5" cy="6.5" r="6.5" fill="#2d7f3d"/><path d="M9.3 4.6 A3.2 3.2 0 1 0 9.3 8.4" fill="none" stroke="#fff" stroke-width="2.3"/><circle cx="6.5" cy="6.5" r="1.2" fill="#2d7f3d"/></svg>
<div class="tt" style="left:80.7px;top:360px;letter-spacing:0.818px">plvjmlgkrvll</div>
<svg class="a" style="left:45px;top:383.3px" width="7" height="7" viewBox="0 0 7 7"><path d="M0.5 0.5 L5.8 3.2 L0.5 5.9 Z" fill="#8a8a8a" stroke="#4a4a4a" stroke-width="1" stroke-linejoin="round"/></svg>
<svg class="a" style="left:61px;top:379px" width="13" height="13" viewBox="0 0 13 13"><circle cx="6.5" cy="6.5" r="6.5" fill="#2d7f3d"/><path d="M9.3 4.6 A3.2 3.2 0 1 0 9.3 8.4" fill="none" stroke="#fff" stroke-width="2.3"/><circle cx="6.5" cy="6.5" r="1.2" fill="#2d7f3d"/></svg>
<div class="tt" style="left:80.7px;top:378px;letter-spacing:0.598px">pxklouaqoz</div>
<svg class="a" style="left:45px;top:401.3px" width="7" height="7" viewBox="0 0 7 7"><path d="M0.5 0.5 L5.8 3.2 L0.5 5.9 Z" fill="#8a8a8a" stroke="#4a4a4a" stroke-width="1" stroke-linejoin="round"/></svg>
<svg class="a" style="left:61px;top:397px" width="13" height="13" viewBox="0 0 13 13"><circle cx="6.5" cy="6.5" r="6.5" fill="#2d7f3d"/><path d="M9.3 4.6 A3.2 3.2 0 1 0 9.3 8.4" fill="none" stroke="#fff" stroke-width="2.3"/><circle cx="6.5" cy="6.5" r="1.2" fill="#2d7f3d"/></svg>
<div class="tt" style="left:80.7px;top:396px;letter-spacing:0.599px">qqr</div>
<svg class="a" style="left:45px;top:419.3px" width="7" height="7" viewBox="0 0 7 7"><path d="M0.5 0.5 L5.8 3.2 L0.5 5.9 Z" fill="#8a8a8a" stroke="#4a4a4a" stroke-width="1" stroke-linejoin="round"/></svg>
<svg class="a" style="left:61px;top:415px" width="13" height="13" viewBox="0 0 13 13"><circle cx="6.5" cy="6.5" r="6.5" fill="#2d7f3d"/><path d="M9.3 4.6 A3.2 3.2 0 1 0 9.3 8.4" fill="none" stroke="#fff" stroke-width="2.3"/><circle cx="6.5" cy="6.5" r="1.2" fill="#2d7f3d"/></svg>
<div class="tt" style="left:80.7px;top:414px;letter-spacing:0.51px">rzwzkg</div>
<svg class="a" style="left:45px;top:437.3px" width="7" height="7" viewBox="0 0 7 7"><path d="M0.5 0.5 L5.8 3.2 L0.5 5.9 Z" fill="#8a8a8a" stroke="#4a4a4a" stroke-width="1" stroke-linejoin="round"/></svg>
<svg class="a" style="left:61px;top:433px" width="13" height="13" viewBox="0 0 13 13"><circle cx="6.5" cy="6.5" r="6.5" fill="#2d7f3d"/><path d="M9.3 4.6 A3.2 3.2 0 1 0 9.3 8.4" fill="none" stroke="#fff" stroke-width="2.3"/><circle cx="6.5" cy="6.5" r="1.2" fill="#2d7f3d"/></svg>
<div class="tt" style="left:80.7px;top:432px;letter-spacing:0.984px">tuwddsfc</div>
<svg class="a" style="left:45px;top:455.3px" width="7" height="7" viewBox="0 0 7 7"><path d="M0.5 0.5 L5.8 3.2 L0.5 5.9 Z" fill="#8a8a8a" stroke="#4a4a4a" stroke-width="1" stroke-linejoin="round"/></svg>
<svg class="a" style="left:61px;top:451px" width="13" height="13" viewBox="0 0 13 13"><circle cx="6.5" cy="6.5" r="6.5" fill="#2d7f3d"/><path d="M9.3 4.6 A3.2 3.2 0 1 0 9.3 8.4" fill="none" stroke="#fff" stroke-width="2.3"/><circle cx="6.5" cy="6.5" r="1.2" fill="#2d7f3d"/></svg>
<div class="tt" style="left:80.7px;top:450px;letter-spacing:0.786px">ufmkutohbyyvbzf</div>
<svg class="a" style="left:45px;top:473.3px" width="7" height="7" viewBox="0 0 7 7"><path d="M0.5 0.5 L5.8 3.2 L0.5 5.9 Z" fill="#8a8a8a" stroke="#4a4a4a" stroke-width="1" stroke-linejoin="round"/></svg>
<svg class="a" style="left:61px;top:469px" width="13" height="13" viewBox="0 0 13 13"><circle cx="6.5" cy="6.5" r="6.5" fill="#2d7f3d"/><path d="M9.3 4.6 A3.2 3.2 0 1 0 9.3 8.4" fill="none" stroke="#fff" stroke-width="2.3"/><circle cx="6.5" cy="6.5" r="1.2" fill="#2d7f3d"/></svg>
<div class="tt" style="left:80.7px;top:468px;letter-spacing:0.42px">urpzdzusaf</div>
<svg class="a" style="left:45px;top:491.3px" width="7" height="7" viewBox="0 0 7 7"><path d="M0.5 0.5 L5.8 3.2 L0.5 5.9 Z" fill="#8a8a8a" stroke="#4a4a4a" stroke-width="1" stroke-linejoin="round"/></svg>
<svg class="a" style="left:61px;top:487px" width="13" height="13" viewBox="0 0 13 13"><circle cx="6.5" cy="6.5" r="6.5" fill="#2d7f3d"/><path d="M9.3 4.6 A3.2 3.2 0 1 0 9.3 8.4" fill="none" stroke="#fff" stroke-width="2.3"/><circle cx="6.5" cy="6.5" r="1.2" fill="#2d7f3d"/></svg>
<div class="tt" style="left:80.7px;top:486px;letter-spacing:0.583px">wcepamghvdpafmj</div>
<svg class="a" style="left:17px;top:509.3px" width="7" height="7" viewBox="0 0 7 7"><path d="M0.5 0.5 L5.8 3.2 L0.5 5.9 Z" fill="#8a8a8a" stroke="#4a4a4a" stroke-width="1" stroke-linejoin="round"/></svg>
<svg class="a" style="left:33px;top:507px" width="16" height="13" viewBox="0 0 16 13"><path d="M0.5 11.5 V4 Q0.5 1.5 3 1.5 H6 V11.5 Z" fill="#fbe9b8" stroke="#d07a28" stroke-width="1"/><path d="M0.5 11.5 L3.5 6.5 H15 L12 11.5 Z" fill="#f9dc92" stroke="#d07a28" stroke-width="1" stroke-linejoin="round"/><text x="3.6" y="5.6" font-family="Liberation Sans" font-weight="bold" font-size="7" fill="#0a2660" textLength="10.5" lengthAdjust="spacingAndGlyphs">010</text></svg>
<div class="tt" style="left:52.7px;top:504px;letter-spacing:-0.016px">Resources</div>
<svg class="a" style="left:32px;top:523px" width="17" height="17" viewBox="0 0 17 17"><circle cx="11" cy="5.2" r="4.8" fill="#f4c63a" stroke="#d8981e" stroke-width="0.9"/><circle cx="12" cy="4.2" r="1.3" fill="#fffbe8" stroke="#d8a030" stroke-width="0.5"/><path d="M8 8.2 L0.8 14.8 L2.3 16 L3.6 14.8 L4.6 15.6 L5.6 14.6 L4.8 13.6 L10 9.5 Z" fill="#f4c63a" stroke="#d8981e" stroke-width="0.9" stroke-linejoin="round"/></svg>
<div class="tt" style="left:52.7px;top:522px;letter-spacing:0.538px">Certificate</div>
</div>
<svg width="0" height="0" style="position:absolute"><defs>
<linearGradient id="gThumbH" x1="0" y1="0" x2="0" y2="1"><stop offset="0" stop-color="#fcfcfc"/><stop offset="1" stop-color="#e6e6e5"/></linearGradient>
<linearGradient id="gThumbV" x1="0" y1="0" x2="1" y2="0"><stop offset="0" stop-color="#fcfcfc"/><stop offset="1" stop-color="#e6e6e5"/></linearGradient>
</defs></svg><svg class="a" style="left:68px;top:754px;" width="248" height="13" viewBox="0 0 248 13"><rect x="0" y="0" width="248" height="13" fill="#f2f1f0"/><rect x="0.5" y="0.5" width="25.0" height="12" rx="6" fill="#f8f8f7" stroke="#aaa6a0" stroke-width="1"/><rect x="217.5" y="0.5" width="30" height="12" rx="6" fill="#f8f8f7" stroke="#aaa6a0" stroke-width="1"/><rect x="13.0" y="0.5" width="219.5" height="12" rx="6" fill="#dddbd7" stroke="#bdb9b3" stroke-width="1"/><path d="M0 0.5 H248" stroke="#b4b0aa" stroke-width="1"/><path d="M7.0 6.5 L10.0 3.8 V9.2 Z" fill="#555"/><path d="M243.5 6.5 L240.5 3.8 V9.2 Z" fill="#555"/><rect x="13.0" y="0.5" width="147.0" height="12" rx="6" fill="url(#gThumbH)" stroke="#9f9b95" stroke-width="1"/><rect x="83.0" y="4.5" width="1" height="4" fill="#707070"/><rect x="86.0" y="4.5" width="1" height="4" fill="#707070"/><rect x="89.0" y="4.5" width="1" height="4" fill="#707070"/></svg><div class="a" style="left:318px;top:435px;width:4px;height:1px;background:#b0aeaa;box-shadow:0 1px 0 #fff"></div><div class="a" style="left:318px;top:438px;width:4px;height:1px;background:#b0aeaa;box-shadow:0 1px 0 #fff"></div><div class="a" style="left:318px;top:441px;width:4px;height:1px;background:#b0aeaa;box-shadow:0 1px 0 #fff"></div>
<div class="a" style="left:325px;top:144px;width:1039px;height:622px;border:1px solid #aeaaa4;border-radius:3px;background:#f5f4f3"></div>
<div class="a" style="left:325px;top:110px;width:379px;height:36px;border:1px solid #aeaaa4;border-bottom:none;border-radius:4px 4px 0 0;background:linear-gradient(#fbfbfb,#f4f4f3)"></div>
<div class="a" style="left:326px;top:146px;width:1023px;height:1px;background:#bcb8b2"></div>
<svg class="a" style="left:335px;top:124px" width="13" height="13" viewBox="0 0 13 13"><circle cx="6.5" cy="6.5" r="6.5" fill="#2d7f3d"/><path d="M9.3 4.6 A3.2 3.2 0 1 0 9.3 8.4" fill="none" stroke="#fff" stroke-width="2.3"/><circle cx="6.5" cy="6.5" r="1.2" fill="#2d7f3d"/></svg>
<div class="a tt" style="left:353px;top:122.5px;color:#333;letter-spacing:0.599px">jmzfzllqhjsyhbm.xkdbapmjzjjsgaot.eltxatpw.c</div>
<svg class="a" style="left:683px;top:125.5px" width="13" height="13" viewBox="0 0 13 13"><path d="M1.8 1.8 L10.8 10.8 M10.8 1.8 L1.8 10.8" stroke="#c85a5a" stroke-width="3.4" stroke-linecap="square"/><path d="M2 2 L10.6 10.6 M10.6 2 L2 10.6" stroke="#e08c8c" stroke-width="1.8" stroke-linecap="square"/></svg>
<div class="a" style="left:326px;top:147px;width:1023px;height:604px;background:#fff;overflow:hidden">
<div class="a" style="left:39px;top:0;width:1px;height:604px;background:#008000"></div>
<div class="code" style="letter-spacing:0.3px;left:105px;top:-12px"><span class="h">stringBuilder2</span>.append<span class="p">(</span>str<span class="p">)</span>;</div>
<div class="code" style="letter-spacing:0.27px;left:105px;top:3px"><span class="h">stringBuilder2</span>.append<span class="p">(</span><span class="s">&quot;com.axis.mobile,&quot;</span><span class="p">)</span>;</div>
<div class="code" style="letter-spacing:0.363px;left:105px;top:18px">str <span class="o">=</span> <span class="h">stringBuilder2</span>.toString<span class="p">(</span><span class="p">)</span>;</div>
<div class="code" style="letter-spacing:0px;left:89px;top:33px"><span class="p">}</span></div>
<div class="code" style="letter-spacing:0.236px;left:89px;top:48px"><span class="k">if</span> <span class="p">(</span>applicationInfo.packageName.equals<span class="p">(</span><span class="s">&quot;cz.csob.smartbanking&quot;</span><span class="p">)</span><span class="p">)</span> <span class="p">{</span></div>
<div class="code" style="letter-spacing:0.316px;left:105px;top:63px"><span class="h">stringBuilder2</span> <span class="o">=</span> <span class="k">new</span> <span class="c">StringBuilder</span><span class="p">(</span><span class="p">)</span>;</div>
<div class="code" style="letter-spacing:0.3px;left:105px;top:78px"><span class="h">stringBuilder2</span>.append<span class="p">(</span>str<span class="p">)</span>;</div>
<div class="code" style="letter-spacing:0.284px;left:105px;top:93px"><span class="h">stringBuilder2</span>.append<span class="p">(</span><span class="s">&quot;cz.csob.smartbanking,&quot;</span><span class="p">)</span>;</div>
<div class="code" style="letter-spacing:0.363px;left:105px;top:108px">str <span class="o">=</span> <span class="h">stringBuilder2</span>.toString<span class="p">(</span><span class="p">)</span>;</div>
<div class="code" style="letter-spacing:0px;left:89px;top:123px"><span class="p">}</span></div>
<div class="code" style="letter-spacing:0.218px;left:85px;top:138px;padding-left:4px;padding-right:1px;background:#c8c8ff"><span class="k">if</span> <span class="p">(</span>applicationInfo.packageName.equals<span class="p">(</span><span class="s">&quot;cz.sberbankcz&quot;</span><span class="p">)</span><span class="p">)</span> <span class="p">{</span><span style="display:inline-block;width:1px;height:13px;background:#10106a;vertical-align:-2px"></span></div>
<div class="code" style="letter-spacing:0.316px;left:41px;top:153px;padding-left:64px;padding-right:0px;background:#c8c8ff">stringBuilder2 <span class="o">=</span> <span class="k">new</span> <span class="c">StringBuilder</span><span class="p">(</span><span class="p">)</span>;</div>
<div class="code" style="letter-spacing:0.3px;left:41px;top:168px;padding-left:64px;padding-right:0px;background:#c8c8ff">stringBuilder2.append<span class="p">(</span>str<span class="p">)</span>;</div>
<div class="code" style="letter-spacing:0.271px;left:41px;top:183px;padding-left:64px;padding-right:0px;background:#c8c8ff">stringBuilder2.append<span class="p">(</span><span class="s">&quot;cz.sberbankcz,&quot;</span><span class="p">)</span>;</div>
<div class="code" style="letter-spacing:0.363px;left:41px;top:198px;padding-left:64px;padding-right:0px;background:#c8c8ff">str <span class="o">=</span> stringBuilder2.toString<span class="p">(</span><span class="p">)</span>;</div>
<div class="code" style="letter-spacing:0px;left:41px;top:213px;padding-left:48px;padding-right:3px;background:#c8c8ff"><span class="p">}</span></div>
<div class="code" style="letter-spacing:0.171px;left:89px;top:228px"><span class="k">if</span> <span class="p">(</span>applicationInfo.packageName.equals<span class="p">(</span><span class="s">&quot;sk.sporoapps.accounts&quot;</span><span class="p">)</span> <span class="o">||</span> applicationInfo.packageName.equals<span class="p">(</span><span class="s">&quot;sk.sporoapps.skener&quot;</span><span class="p">)</span><span class="p">)</span> <span class="p">{</span></div>
<div class="code" style="letter-spacing:0.316px;left:105px;top:243px"><span class="h">stringBuilder2</span> <span class="o">=</span> <span class="k">new</span> <span class="c">StringBuilder</span><span class="p">(</span><span class="p">)</span>;</div>
<div class="code" style="letter-spacing:0.3px;left:105px;top:258px"><span class="h">stringBuilder2</span>.append<span class="p">(</span>str<span class="p">)</span>;</div>
<div class="code" style="letter-spacing:0.27px;left:105px;top:273px"><span class="h">stringBuilder2</span>.append<span class="p">(</span><span class="s">&quot;sk.sporoapps.accounts,&quot;</span><span class="p">)</span>;</div>
<div class="code" style="letter-spacing:0.363px;left:105px;top:288px">str <span class="o">=</span> <span class="h">stringBuilder2</span>.toString<span class="p">(</span><span class="p">)</span>;</div>
<div class="code" style="letter-spacing:0px;left:89px;top:303px"><span class="p">}</span></div>
<div class="code" style="letter-spacing:0.176px;left:89px;top:318px"><span class="k">if</span> <span class="p">(</span>applicationInfo.packageName.equals<span class="p">(</span><span class="s">&quot;com.cleverlance.csas.servis24&quot;</span><span class="p">)</span><span class="p">)</span> <span class="p">{</span></div>
<div class="code" style="letter-spacing:0.316px;left:105px;top:333px"><span class="h">stringBuilder2</span> <span class="o">=</span> <span class="k">new</span> <span class="c">StringBuilder</span><span class="p">(</span><span class="p">)</span>;</div>
<div class="code" style="letter-spacing:0.3px;left:105px;top:348px"><span class="h">stringBuilder2</span>.append<span class="p">(</span>str<span class="p">)</span>;</div>
<div class="code" style="letter-spacing:0.202px;left:105px;top:363px"><span class="h">stringBuilder2</span>.append<span class="p">(</span><span class="s">&quot;com.cleverlance.csas.servis24,&quot;</span><span class="p">)</span>;</div>
<div class="code" style="letter-spacing:0.363px;left:105px;top:378px">str <span class="o">=</span> <span class="h">stringBuilder2</span>.toString<span class="p">(</span><span class="p">)</span>;</div>
<div class="code" style="letter-spacing:0px;left:89px;top:393px"><span class="p">}</span></div>
<div class="code" style="letter-spacing:0.221px;left:89px;top:408px"><span class="k">if</span> <span class="p">(</span>applicationInfo.packageName.equals<span class="p">(</span><span class="s">&quot;org.westpac.bank&quot;</span><span class="p">)</span> <span class="o">||</span> applicationInfo.packageName.equals<span class="p">(</span><span class="s">&quot;nz.co.westpac&quot;</span><span class="p">)</span><span class="p">)</span> <span class="p">{</span></div>
<div class="code" style="letter-spacing:0.316px;left:105px;top:423px"><span class="h">stringBuilder2</span> <span class="o">=</span> <span class="k">new</span> <span class="c">StringBuilder</span><span class="p">(</span><span class="p">)</span>;</div>
<div class="code" style="letter-spacing:0.3px;left:105px;top:438px"><span class="h">stringBuilder2</span>.append<span class="p">(</span>str<span class="p">)</span>;</div>
<div class="code" style="letter-spacing:0.266px;left:105px;top:453px"><span class="h">stringBuilder2</span>.append<span class="p">(</span><span class="s">&quot;org.westpac.bank,nz.co.westpac,&quot;</span><span class="p">)</span>;</div>
<div class="code" style="letter-spacing:0.363px;left:105px;top:468px">str <span class="o">=</span> <span class="h">stringBuilder2</span>.toString<span class="p">(</span><span class="p">)</span>;</div>
<div class="code" style="letter-spacing:0px;left:89px;top:483px"><span class="p">}</span></div>
<div class="code" style="letter-spacing:0.224px;left:89px;top:498px"><span class="k">if</span> <span class="p">(</span>applicationInfo.packageName.equals<span class="p">(</span><span class="s">&quot;au.com.suncorp.SuncorpBank&quot;</span><span class="p">)</span><span class="p">)</span> <span class="p">{</span></div>
<div class="code" style="letter-spacing:0.316px;left:105px;top:513px"><span class="h">stringBuilder2</span> <span class="o">=</span> <span class="k">new</span> <span class="c">StringBuilder</span><span class="p">(</span><span class="p">)</span>;</div>
<div class="code" style="letter-spacing:0.3px;left:105px;top:528px"><span class="h">stringBuilder2</span>.append<span class="p">(</span>str<span class="p">)</span>;</div>
<div class="code" style="letter-spacing:0.27px;left:105px;top:543px"><span class="h">stringBuilder2</span>.append<span class="p">(</span><span class="s">&quot;au.com.suncorp.SuncorpBank,&quot;</span><span class="p">)</span>;</div>
<div class="code" style="letter-spacing:0.363px;left:105px;top:558px">str <span class="o">=</span> <span class="h">stringBuilder2</span>.toString<span class="p">(</span><span class="p">)</span>;</div>
<div class="code" style="letter-spacing:0px;left:89px;top:573px"><span class="p">}</span></div>
<div class="code" style="letter-spacing:0.241px;left:89px;top:588px"><span class="k">if</span> <span class="p">(</span>applicationInfo.packageName.equals<span class="p">(</span><span class="s">&quot;org.stgeorge.bank&quot;</span><span class="p">)</span><span class="p">)</span> <span class="p">{</span></div>
</div>
<svg class="a" style="left:326px;top:751px;" width="1023" height="13" viewBox="0 0 1023 13"><rect x="0" y="0" width="1023" height="13" fill="#f6f5f4"/><rect x="0.5" y="0.5" width="25.0" height="12" rx="6" fill="#f8f8f7" stroke="#aaa6a0" stroke-width="1"/><rect x="996.5" y="0.5" width="26" height="12" rx="6" fill="#f8f8f7" stroke="#aaa6a0" stroke-width="1"/><rect x="13.0" y="0.5" width="996.5" height="12" rx="6" fill="#dddbd7" stroke="#bdb9b3" stroke-width="1"/><path d="M0 0.5 H1023" stroke="#b4b0aa" stroke-width="1"/><path d="M7.0 6.5 L10.0 3.8 V9.2 Z" fill="#555"/><path d="M1018.5 6.5 L1015.5 3.8 V9.2 Z" fill="#555"/><rect x="14.5" y="0.5" width="33.5" height="12" rx="6" fill="url(#gThumbH)" stroke="#9f9b95" stroke-width="1"/><rect x="27.75" y="4.5" width="1" height="4" fill="#707070"/><rect x="30.75" y="4.5" width="1" height="4" fill="#707070"/><rect x="33.75" y="4.5" width="1" height="4" fill="#707070"/></svg><svg class="a" style="left:1349px;top:146px;" width="13" height="605" viewBox="0 0 13 605"><rect x="0" y="0" width="13" height="605" fill="#f6f5f4"/><rect x="0.5" y="0.5" width="12" height="27.0" rx="6" fill="#f8f8f7" stroke="#aaa6a0" stroke-width="1"/><rect x="0.5" y="575.5" width="12" height="29.0" rx="6" fill="#f8f8f7" stroke="#aaa6a0" stroke-width="1"/><rect x="0.5" y="14.0" width="12" height="576.0" rx="6" fill="#dddbd7" stroke="#bdb9b3" stroke-width="1"/><path d="M0.5 0 V605" stroke="#b4b0aa" stroke-width="1"/><path d="M3.8 9 L6.5 5.8 L9.2 9 Z" fill="#444"/><path d="M3.8 596 L6.5 599.2 L9.2 596 Z" fill="#444"/><rect x="0.5" y="333.5" width="12" height="30" rx="6" fill="url(#gThumbV)" stroke="#9f9b95" stroke-width="1"/><rect x="4.5" y="345.0" width="4" height="1" fill="#707070"/><rect x="4.5" y="348.0" width="4" height="1" fill="#707070"/><rect x="4.5" y="351.0" width="4" height="1" fill="#707070"/></svg>
</body></html>
